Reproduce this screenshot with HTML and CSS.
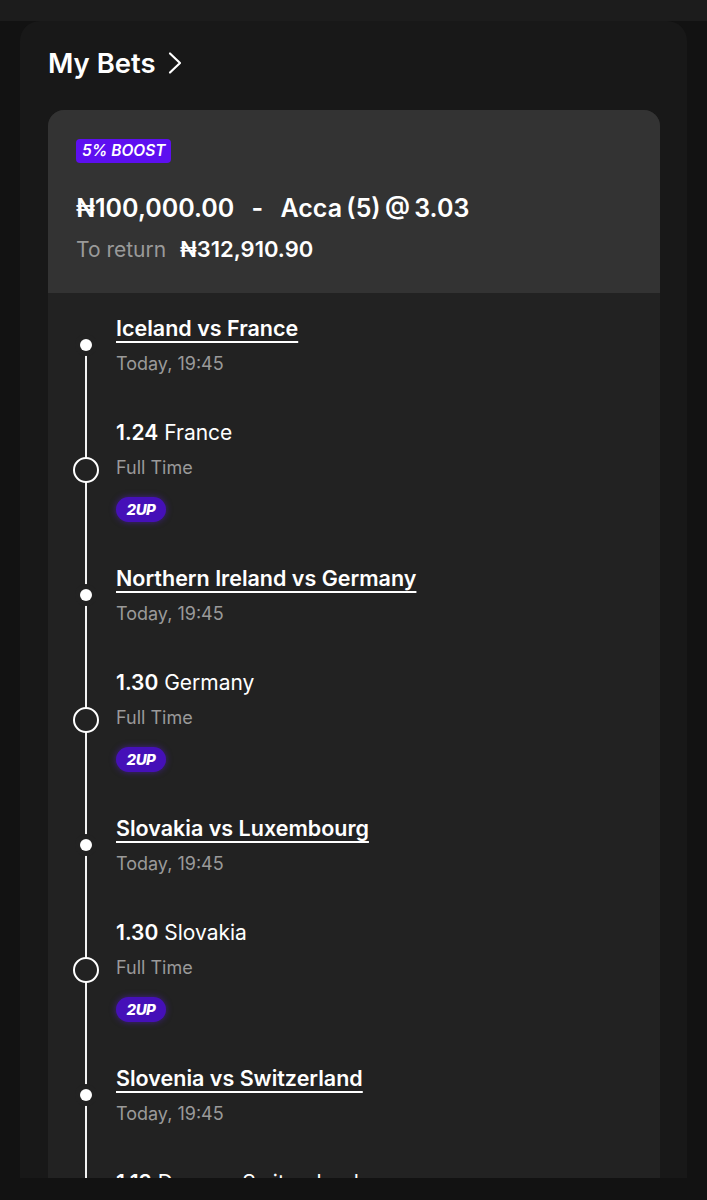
FILE: index.html
```html
<!DOCTYPE html>
<html lang="en">
<head>
  <meta charset="UTF-8" />
  <title>My Bets</title>
  <link rel="stylesheet" href="styles.css">
</head>
<body>
  <div class="topbar"></div>

  <div class="panel">
    <h1 class="title">
      My Bets
      <svg class="chevron" width="18" height="24" viewBox="0 0 18 24">
        <path d="M4 2.5 L14 12 L4 21.5" fill="none" stroke="#fff" stroke-width="2.2" stroke-linecap="round" stroke-linejoin="round"/>
      </svg>
    </h1>

    <div class="bet">
      <div class="bet-head">
        <span class="boost">5% BOOST</span>
        <div class="stake">
          <span>₦100,000.00</span>
          <span class="dash">-</span>
          <span class="acca">Acca (5) @ 3.03</span>
        </div>
        <div class="return">
          <span class="label">To return</span>
          <span class="amount">₦312,910.90</span>
        </div>
      </div>

      <div class="legs">
        <div class="leg">
          <div class="match">
            <span class="teams">Iceland vs France</span>
            <div class="time">Today, 19:45</div>
          </div>
          <div class="pick">
            <div class="selection"><b>1.24</b> France</div>
            <div class="market">Full Time</div>
            <span class="tag">2UP</span>
          </div>
        </div>

        <div class="leg">
          <div class="match">
            <span class="teams">Northern Ireland vs Germany</span>
            <div class="time">Today, 19:45</div>
          </div>
          <div class="pick">
            <div class="selection"><b>1.30</b> Germany</div>
            <div class="market">Full Time</div>
            <span class="tag">2UP</span>
          </div>
        </div>

        <div class="leg">
          <div class="match">
            <span class="teams">Slovakia vs Luxembourg</span>
            <div class="time">Today, 19:45</div>
          </div>
          <div class="pick">
            <div class="selection"><b>1.30</b> Slovakia</div>
            <div class="market">Full Time</div>
            <span class="tag">2UP</span>
          </div>
        </div>

        <div class="leg">
          <div class="match">
            <span class="teams">Slovenia vs Switzerland</span>
            <div class="time">Today, 19:45</div>
          </div>
          <div class="pick">
            <div class="selection"><b>1.13</b> Draw or Switzerland</div>
            <div class="market">Full Time</div>
            <span class="tag">2UP</span>
          </div>
        </div>
      </div>
    </div>
  </div>
</body>
</html>
```

FILE: styles.css
```css
body {
  margin: 0;
  background-color: #121212;
  font-family: Inter, "DejaVu Sans", sans-serif;
  color: #fff;
}

.topbar {
  height: 21px;
  background-color: #1c1c1c;
}

.panel {
  margin: 0 20px;
  height: 1157px;
  padding: 26px 27px 0 28px;
  box-sizing: border-box;
  background-color: #181818;
  border-radius: 20px 20px 0 0;
  overflow: hidden;
}

.title {
  display: flex;
  align-items: center;
  gap: 10px;
  margin: 0;
  font-size: 27.5px;
  line-height: 32px;
  font-weight: 600;
}

.bet {
  margin-top: 31px;
  border-radius: 16px 16px 0 0;
  overflow: hidden;
  background-color: #222;
}

.bet-head {
  display: flex;
  flex-direction: column;
  align-items: flex-start;
  padding: 29px 28px 30px;
  background-color: #333;
}

.boost {
  height: 24px;
  line-height: 24px;
  padding: 0 5px 0 6px;
  border-radius: 4px;
  background-color: #5d0ff0;
  font-size: 15.5px;
  font-weight: 600;
  font-style: italic;
}

.stake {
  margin-top: 30px;
  font-size: 25px;
  line-height: 30px;
  font-weight: 600;
}

.dash {
  margin: 0 11px;
}

.acca {
  word-spacing: -2px;
}

.return {
  margin-top: 12px;
  height: 28px;
  font-size: 21px;
  line-height: 28px;
}

.return .label {
  color: #9a9a9a;
  margin-right: 8px;
}

.return .amount {
  font-size: 22px;
  font-weight: 600;
}

.legs {
  position: relative;
  padding: 22px 0 0 68px;
}

.legs::before {
  content: "";
  position: absolute;
  left: 37px;
  top: 52px;
  bottom: 0;
  width: 2px;
  background-color: #f2f2f2;
}

.leg {
  padding-bottom: 43px;
}

.match,
.pick {
  position: relative;
}

.match::before {
  content: "";
  position: absolute;
  left: -36px;
  top: 24px;
  width: 12px;
  height: 12px;
  border-radius: 50%;
  background-color: #fff;
  box-shadow: 0 0 0 5px #222;
}

.teams {
  font-size: 21.5px;
  line-height: 26px;
  font-weight: 600;
  text-decoration: underline;
  text-decoration-thickness: 2px;
  text-underline-offset: 5px;
}

.time,
.market {
  font-size: 18px;
  line-height: 22px;
  color: #9a9a9a;
}

.time {
  margin-top: 12px;
}

.pick {
  margin-top: 45px;
}

.pick::before {
  content: "";
  position: absolute;
  left: -43px;
  top: 37px;
  width: 26px;
  height: 26px;
  box-sizing: border-box;
  border: 2px solid #fff;
  border-radius: 50%;
  background-color: #222;
}

.selection {
  font-size: 21px;
  line-height: 26px;
}

.selection b {
  font-weight: 600;
}

.market {
  margin-top: 11px;
}

.tag {
  display: inline-block;
  margin-top: 18px;
  width: 50px;
  height: 25px;
  line-height: 25px;
  border-radius: 13px;
  text-align: center;
  background-color: #4510b8;
  box-shadow: 0 0 6px rgba(90, 30, 220, 0.55);
  font-size: 15px;
  font-weight: 800;
  font-style: italic;
  letter-spacing: -0.5px;
}
```
